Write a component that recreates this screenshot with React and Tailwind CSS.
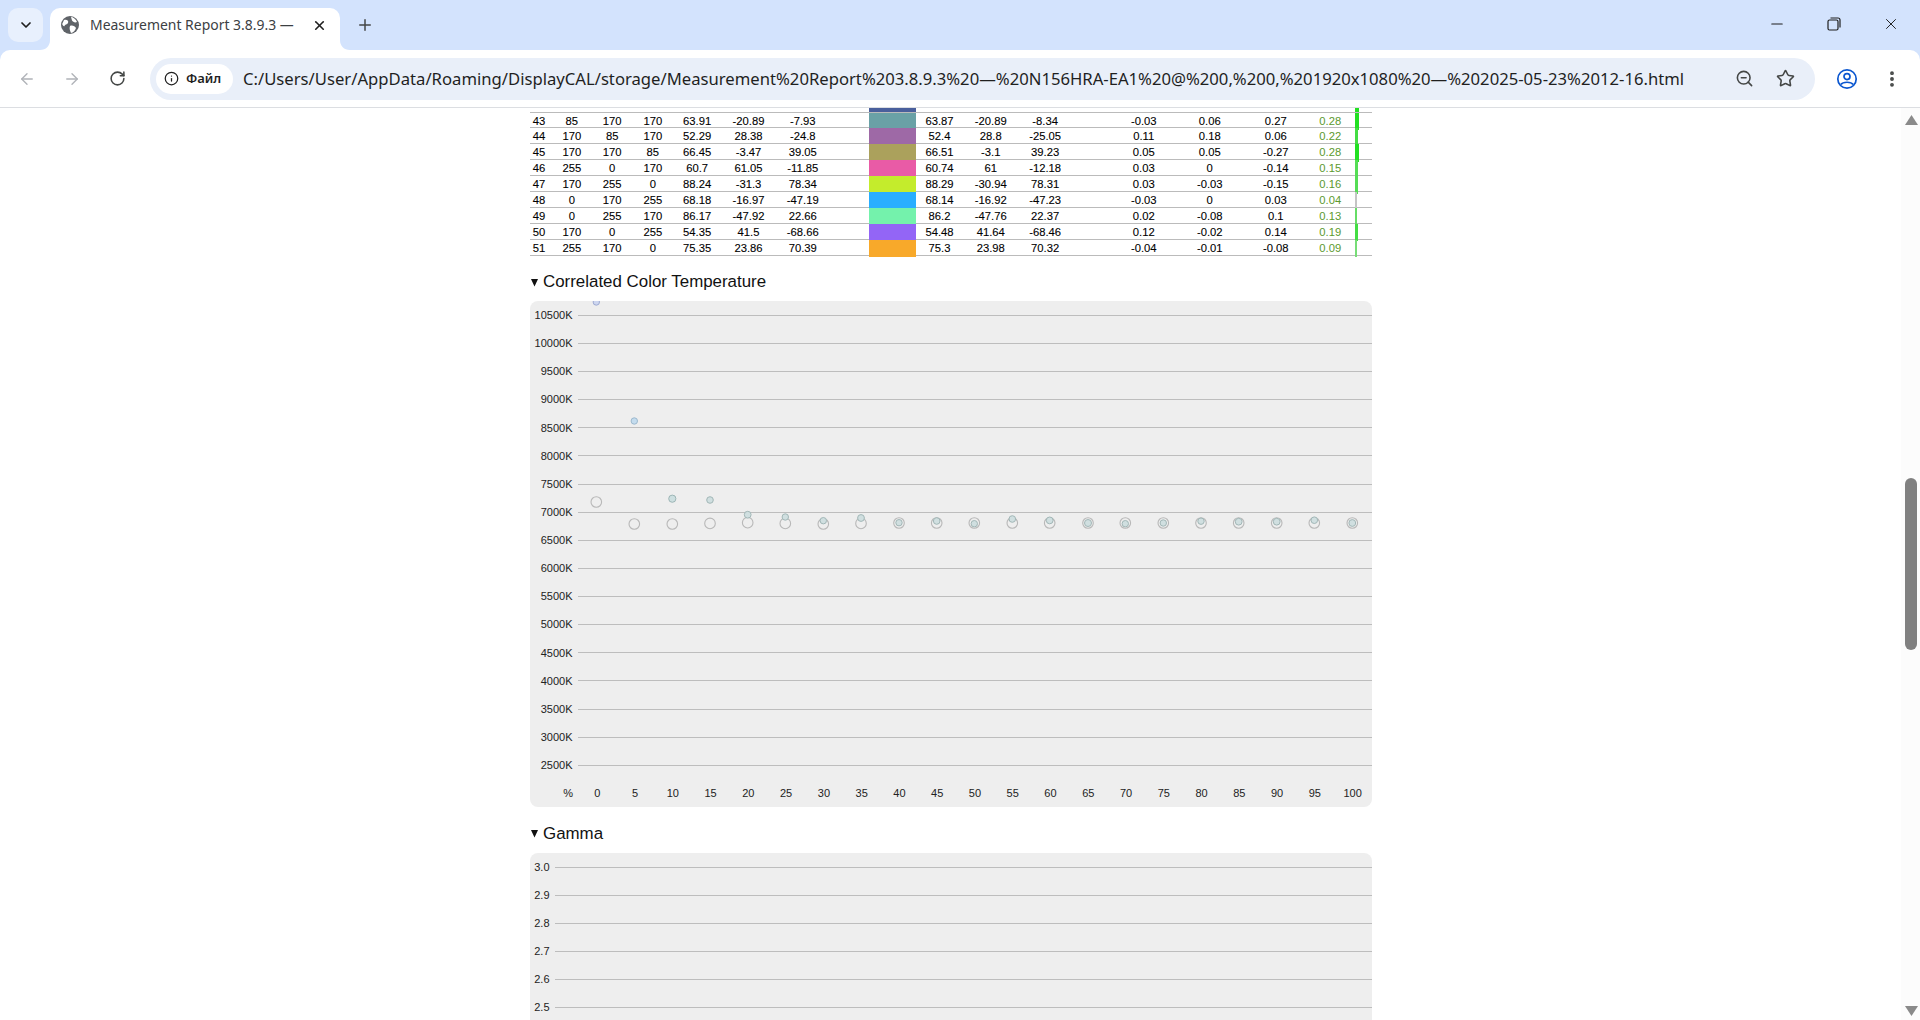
import React from "react";
import { ArrowLeft, ArrowRight, RotateCw, ChevronDown, X, Plus, Star, ZoomOut, EllipsisVertical, Info, Minus } from "lucide-react";

const cols = "grid grid-cols-[19px_46.6px_34.2px_47px_41.8px_60.8px_47.8px_42.8px_47px_46px_56.6px_52.2px_43.2px_58.6px_73.4px_58.7px_50.3px_16px]";

const rows = [
  ["43","85","170","170","63.91","-20.89","-7.93","#6aa1a6","63.87","-20.89","-8.34","-0.03","0.06","0.27","0.28",4,"#22e022"],
  ["44","170","85","170","52.29","28.38","-24.8","#9e69a6","52.4","28.8","-25.05","0.11","0.18","0.06","0.22",3,"#44dd44"],
  ["45","170","170","85","66.45","-3.47","39.05","#aba15c","66.51","-3.1","39.23","0.05","0.05","-0.27","0.28",4,"#22e022"],
  ["46","255","0","170","60.7","61.05","-11.85","#e95ba6","60.74","61","-12.18","0.03","0","-0.14","0.15",3,"#55dd55"],
  ["47","170","255","0","88.24","-31.3","78.34","#c4ec2c","88.29","-30.94","78.31","0.03","-0.03","-0.15","0.16",3,"#55dd55"],
  ["48","0","170","255","68.18","-16.97","-47.19","#29aeff","68.14","-16.92","-47.23","-0.03","0","0.03","0.04",2,"#c4c4c4"],
  ["49","0","255","170","86.17","-47.92","22.66","#74f2ac","86.2","-47.76","22.37","0.02","-0.08","0.1","0.13",2,"#66dd66"],
  ["50","170","0","255","54.35","41.5","-68.66","#9365f6","54.48","41.64","-68.46","0.12","-0.02","0.14","0.19",3,"#44dd44"],
  ["51","255","170","0","75.35","23.86","70.39","#f8a92a","75.3","23.98","70.32","-0.04","-0.01","-0.08","0.09",2,"#77dd77"],
];

const pts = [
  [66.3,201,1,0.5,"#cdd6ef","#9fabd2",3.2],
  [104.3,223,120,0,"#c4dcee","#9db9ce",3.2],
  [142.3,223,197.7,0,"#cddfe0","#9db6b6",3.6],
  [180,222.4,199,0,"#d0dfe0","#a2b7b7",3.3],
  [217.7,221.7,213.7,0,"#d0dfe0","#a2b7b7",3.4],
  [255.3,222.4,216,0,"#d0dfe0","#a2b7b7",3.2],
  [293.3,223,219.7,0,"#d0dfe0","#a2b7b7",3.2],
  [331,222.4,217,0,"#d0dfe0","#a2b7b7",3.4],
  [369,222,221.7,0,"#d0dfe0","#a2b7b7",3.2],
  [406.7,222,220,0,"#d0dfe0","#a2b7b7",3.3],
  [444.3,222,222.7,0,"#d0dfe0","#a2b7b7",3.2],
  [482.3,222,218,0,"#d0dfe0","#a2b7b7",3.3],
  [519.7,222,219.4,0,"#d0dfe0","#a2b7b7",3.4],
  [558,222,222,0,"#d0dfe0","#a2b7b7",3.5],
  [595.3,222,222.7,0,"#d0dfe0","#a2b7b7",3.2],
  [633.3,222,222,0,"#d0dfe0","#a2b7b7",3.2],
  [671,222,220.2,0,"#d0dfe0","#a2b7b7",3.2],
  [708.7,222,220.7,0,"#d0dfe0","#a2b7b7",3.4],
  [746.7,222,220.7,0,"#d0dfe0","#a2b7b7",3.4],
  [784.3,222,219.2,0,"#d0dfe0","#a2b7b7",3.3],
  [822.3,222,222,0,"#d0dfe0","#a2b7b7",3.4],
];

const cct = ["10500K","10000K","9500K","9000K","8500K","8000K","7500K","7000K","6500K","6000K","5500K","5000K","4500K","4000K","3500K","3000K","2500K"];
const gamma = ["3.0","2.9","2.8","2.7","2.6","2.5"];
const xs = ["0","5","10","15","20","25","30","35","40","45","50","55","60","65","70","75","80","85","90","95","100"];

function Heading({ children }) {
  return (
    <div className="flex h-[45.6px] items-start pt-[16px] pl-px">
      <svg width="7" height="20" viewBox="0 0 7 20" className="shrink-0"><path d="M0 7 H7 L3.5 14.5 Z" fill="#111" /></svg>
      <span className="ml-[5.5px] pt-[0.5px] text-[16.9px] leading-[20px] text-[#111]">{children}</span>
    </div>
  );
}

function GridRow({ label, gammaStyle }) {
  return (
    <div className="flex h-[28.125px] items-center">
      <span className={gammaStyle ? "w-[20px] text-right" : "w-[43px] text-right"}>{label}</span>
      <span className="ml-[5.7px] h-px flex-1 bg-[#bdbdbd]" />
    </div>
  );
}

function Chrome() {
  return (
    <header className="shrink-0 font-['Noto_Sans',sans-serif]">
      <div className="flex h-[50px] items-end bg-[#d3e3fd] text-[#1f1f1f]">
        <div className="mb-[8px] ml-[8px] flex h-[34px] w-[35px] items-center justify-center rounded-[10px] bg-[#e8f0fd]">
          <ChevronDown size={16} strokeWidth={2.6} />
        </div>
        <div className="relative ml-[7px] flex h-[42px] w-[290px] items-center rounded-t-[10px] bg-white pb-[8px] pl-[11px]">
          <svg width="10" height="10" viewBox="0 0 10 10" className="absolute bottom-0 left-[-10px]"><path d="M10 0 C10 6 6 10 0 10 H10 Z" fill="#ffffff" /></svg>
          <svg width="10" height="10" viewBox="0 0 10 10" className="absolute bottom-0 right-[-10px]"><path d="M0 0 C0 6 4 10 10 10 H0 Z" fill="#ffffff" /></svg>
          <svg width="18" height="18" viewBox="0 0 18 18" className="shrink-0">
            <circle cx="9" cy="9" r="9" fill="#5f6368" />
            <path d="M3 4 C6 3 8 5 7 7 C6 9 4 8 3.5 10 C3 11 1.5 9 1.2 8 Z M10 1 C12 1 15 3 16 6 C14 7 12 6 11 4.5 Z M9 10 C11 9 14 10 15 12 C14 15 12 16.5 10 17 C9 15 8 12 9 10 Z" fill="#ffffff" />
          </svg>
          <span className="ml-[11px] w-[210px] overflow-hidden text-[13.95px] whitespace-nowrap text-[#3c4043]">Measurement Report 3.8.9.3 —</span>
          <X size={15} strokeWidth={2.6} className="absolute left-[262px] top-[9.5px] text-[#1f1f1f]" />
        </div>
        <Plus size={18} strokeWidth={2} className="mb-[16px] ml-[16px] text-[#444746]" />
        <div className="mb-[17px] ml-auto flex w-[152px] items-center justify-between pr-[20px] text-[#1f1f1f]">
          <Minus size={18} strokeWidth={1.4} />
          <svg width="14" height="14" viewBox="0 0 14 14" fill="none" stroke="#1f1f1f" strokeWidth="1.2">
            <rect x="1" y="3" width="10" height="10" rx="1.5" />
            <path d="M3.5 1 H11 a2 2 0 0 1 2 2 V10.5" />
          </svg>
          <X size={18} strokeWidth={1.3} />
        </div>
      </div>
      <div className="bg-[#d3e3fd]">
        <div className="flex h-[58px] items-center rounded-t-[10px] border-b border-[#dcdee2] bg-white">
          <div className="flex w-[150px] shrink-0 items-center pl-[18px]">
            <ArrowLeft size={18} strokeWidth={1.8} className="text-[#b0b3b8]" />
            <ArrowRight size={18} strokeWidth={1.8} className="ml-[27px] text-[#b0b3b8]" />
            <RotateCw size={17} strokeWidth={2.2} className="ml-[28px] text-[#444746]" />
          </div>
          <div className="flex h-[42px] w-[1665px] shrink-0 items-center rounded-full bg-[#e9eff9] pl-[6px]">
            <div className="flex h-[30px] w-[77px] items-center rounded-full bg-white pl-[8px] text-[#1f1f1f]">
              <Info size={15} strokeWidth={2} />
              <span className="ml-[7px] text-[13px] font-semibold">Файл</span>
            </div>
            <span className="ml-[10px] pt-[2px] whitespace-nowrap text-[16.66px] text-[#1f1f1f]">C:/Users/User/AppData/Roaming/DisplayCAL/storage/Measurement%20Report%203.8.9.3%20—%20N156HRA-EA1%20@%200,%200,%201920x1080%20—%202025-05-23%2012-16.html</span>
            <ZoomOut size={19} strokeWidth={2} className="ml-auto mr-[1px] text-[#444746]" />
            <Star size={19} strokeWidth={2} className="ml-[21px] mr-[20px] text-[#444746]" />
          </div>
          <svg width="22" height="22" viewBox="0 0 22 22" fill="none" stroke="#0b57d0" strokeWidth="1.7" className="ml-[21px] shrink-0">
            <circle cx="11" cy="11" r="9.2" />
            <circle cx="11" cy="8.6" r="3" />
            <path d="M4.8 16.5 C7 13.5 15 13.5 17.2 16.5" />
          </svg>
          <EllipsisVertical size={20} strokeWidth={2.6} className="ml-[24px] text-[#444746]" />
        </div>
      </div>
    </header>
  );
}

export default function App() {
  return (
    <div className="flex h-screen flex-col overflow-hidden bg-white">
      <Chrome />
      <div className="flex min-h-0 flex-1">
        <main className="min-w-0 flex-1 overflow-hidden font-['Liberation_Sans',Arial,sans-serif] text-[11.25px] text-black">
          <div className="mx-auto w-[842px]">
            <div className={`${cols} h-[4.6px] border-b border-[#bbbbbb]`}>
              <div className="col-start-9 bg-[#4a5f9c]" />
              <div className="col-start-18"><div className="h-full w-[4px] bg-[#22e022]" /></div>
            </div>
            {rows.map((r) => (
              <div key={r[0]} className={`${cols} h-[15.9px] items-stretch border-b border-[#bbbbbb] text-center leading-[17.5px] [-webkit-text-stroke:0.1px_#000]`}>
                <span>{r[0]}</span><span>{r[1]}</span><span>{r[2]}</span><span>{r[3]}</span>
                <span>{r[4]}</span><span>{r[5]}</span><span>{r[6]}</span>
                <span />
                <span style={{ backgroundColor: r[7] }} />
                <span>{r[8]}</span><span>{r[9]}</span><span>{r[10]}</span>
                <span />
                <span>{r[11]}</span><span>{r[12]}</span><span>{r[13]}</span>
                <span className="text-[#5c9a2e] leading-[16px] [-webkit-text-stroke:0px]">{r[14]}</span>
                <span className="flex"><span className="h-full" style={{ width: r[15], backgroundColor: r[16] }} /></span>
              </div>
            ))}
            <Heading>Correlated Color Temperature</Heading>
            <div className="relative overflow-hidden rounded-[8px] bg-[#eeeeee] text-[11px] text-[#222]">
              {cct.map((l) => <GridRow key={l} label={l} />)}
              <div className="flex h-[28.125px] items-center">
                <span className="w-[44px] text-right">%</span>
                <span className="ml-[5.4px] flex">
                  {xs.map((x) => <span key={x} className="w-[37.78px] text-center">{x}</span>)}
                </span>
              </div>
              <svg className="absolute inset-0 h-full w-full">
                {pts.map((p, i) => (
                  <g key={i}>
                    <circle cx={p[0]} cy={p[1]} r="5.3" fill="none" stroke="#b8b8b8" strokeWidth="1.1" />
                    <circle cx={p[0]} cy={p[2]} r={p[6]} fill={p[4]} stroke={p[5]} strokeWidth="1" />
                  </g>
                ))}
              </svg>
            </div>
            <Heading>Gamma</Heading>
            <div className="rounded-t-[8px] bg-[#eeeeee] text-[11px] text-[#222]">
              {gamma.map((l) => <GridRow key={l} label={l} gammaStyle />)}
            </div>
          </div>
        </main>
        <aside className="flex w-[19px] shrink-0 flex-col bg-[#fcfcfc]">
          <div className="flex h-[24px] items-center justify-center pl-[2px]">
            <svg width="13" height="10" viewBox="0 0 13 10"><path d="M6.5 0 L13 10 H0 Z" fill="#8a8a8a" /></svg>
          </div>
          <div className="mt-[346px] ml-[4px] h-[172px] w-[12px] rounded-[6px] bg-[#808080]" />
          <div className="mt-auto flex h-[19px] items-center justify-center pl-[2px]">
            <svg width="13" height="10" viewBox="0 0 13 10"><path d="M6.5 10 L13 0 H0 Z" fill="#8a8a8a" /></svg>
          </div>
        </aside>
      </div>
    </div>
  );
}
